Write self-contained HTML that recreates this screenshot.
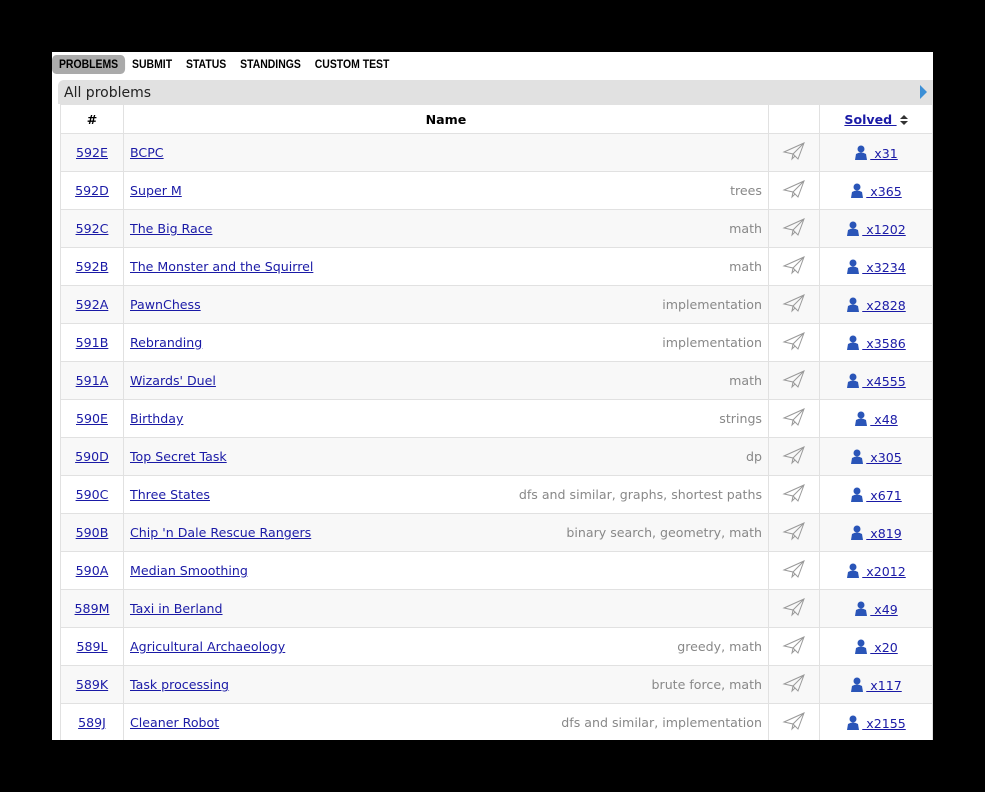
<!DOCTYPE html>
<html><head><meta charset="utf-8"><style>
body{margin:0;background:#000;width:985px;height:792px;overflow:hidden;font-family:"DejaVu Sans",Verdana,sans-serif;}
#p{position:absolute;left:52px;top:52px;width:881px;height:688px;background:#fff;overflow:hidden}
#tabs{position:absolute;left:0;top:3px;height:19px;font-family:"Liberation Sans",Arial,sans-serif;font-size:12px;font-weight:bold;transform:scaleX(0.87);transform-origin:0 0;white-space:nowrap}
#tabs span{display:inline-block;padding:3px 8px;line-height:13px;color:#000}
#tabs span.a{background:#aaa;border-radius:5px}
#hd{position:absolute;left:6px;top:28px;width:875px;height:24px;background:#e1e1e1;border-radius:6px 0 0 0;font-size:14px;line-height:26px;color:#222}
#hd b{font-weight:normal;padding-left:6px}
#arr{position:absolute;right:6px;top:5px;width:0;height:0;border-left:7px solid #3b8fd6;border-top:7px solid transparent;border-bottom:7px solid transparent}
table{position:absolute;left:8px;top:52px;border-collapse:collapse;width:873px;font-size:12.6px;background:#e1e1e1}
td,th{border:1px solid #e1e1e1;height:37px;padding:0 6px}
th{height:28px;background:#fff;font-weight:bold}
tr.g td{background:#f8f8f8}
tr.w td{background:#fff}
a{color:#1a1aa6;text-decoration:underline}
.c1{width:50px;text-align:center}
.c3{width:38px;text-align:center}
.c4{width:100px;text-align:center}
.t{float:right;color:#888}
.u{display:inline-block;vertical-align:-2px;margin-right:2px}
</style></head><body><div id="p">
<div id="tabs"><span class="a">PROBLEMS</span><span>SUBMIT</span><span>STATUS</span><span>STANDINGS</span><span>CUSTOM TEST</span></div>
<div id="hd"><b>All problems</b><div id="arr"></div></div>
<table><tbody id="tb">
<tr><th class="c1">#</th><th>Name</th><th class="c3"></th><th class="c4"><a style="color:#1a1aa6">Solved </a> <svg width="8" height="10" viewBox="0 0 8 10" style="vertical-align:-1px;margin-left:3px"><path d="M0 4 L4 0 L8 4Z M0 6 L4 10 L8 6Z" fill="#333"/></svg></th></tr>
</tbody></table>
</div>
<script>
var rows=[["592E","BCPC","","x31"],["592D","Super M","trees","x365"],["592C","The Big Race","math","x1202"],["592B","The Monster and the Squirrel","math","x3234"],["592A","PawnChess","implementation","x2828"],["591B","Rebranding","implementation","x3586"],["591A","Wizards' Duel","math","x4555"],["590E","Birthday","strings","x48"],["590D","Top Secret Task","dp","x305"],["590C","Three States","dfs and similar, graphs, shortest paths","x671"],["590B","Chip 'n Dale Rescue Rangers","binary search, geometry, math","x819"],["590A","Median Smoothing","","x2012"],["589M","Taxi in Berland","","x49"],["589L","Agricultural Archaeology","greedy, math","x20"],["589K","Task processing","brute force, math","x117"],["589J","Cleaner Robot","dfs and similar, implementation","x2155"]];
var plane='<svg width="24" height="20" viewBox="0 0 24 20"><path d="M2 11 L22 2 L16 18 L11 13 Z M11 13 L22 2 M11 13 L10 18 L13 15" fill="none" stroke="#999" stroke-width="1"/></svg>';
var user='<svg class="u" width="14" height="15" viewBox="0 0 14 15"><circle cx="7" cy="4" r="3.5" fill="#2a55b8"/><path d="M1 15 L2 9 Q7 6 12 9 L13 15 Z" fill="#2a55b8"/></svg>';
var t=document.getElementById('tb'),h='';
rows.forEach(function(r,i){h+='<tr class="'+(i%2?'w':'g')+'"><td class="c1"><a>'+r[0]+'</a></td><td><a>'+r[1]+'</a><span class="t">'+r[2]+'</span></td><td class="c3">'+plane+'</td><td class="c4">'+user+'<a> '+r[3]+'</a></td></tr>';});
t.insertAdjacentHTML('beforeend',h);
</script>
</body></html>
